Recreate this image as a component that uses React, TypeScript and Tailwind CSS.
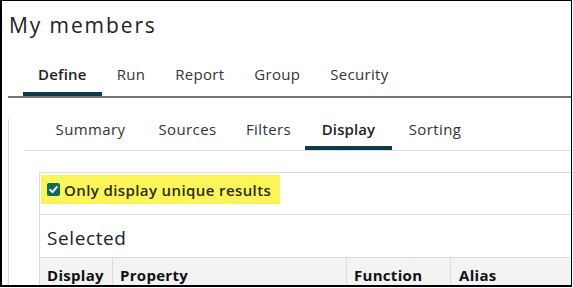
import React from "react";

const mainTabs = ["Define", "Run", "Report", "Group", "Security"];
const subTabs: { label: string; w: string }[] = [
  { label: "Summary", w: "w-[105px]" },
  { label: "Sources", w: "w-[89px]" },
  { label: "Filters", w: "w-[73px]" },
  { label: "Display", w: "w-[87px]" },
  { label: "Sorting", w: "w-[86px]" },
];

export default function App() {
  return (
    <div
      className="w-[573px] h-[288px] bg-white overflow-hidden"
      style={{ fontFamily: '"Open Sans", "Liberation Sans", sans-serif' }}
    >
      <div className="w-[572px] h-[287px] border-l-2 border-t border-r border-b-2 border-black overflow-hidden text-[#222]">
        {/* Title */}
        <div className="pl-[7px] pt-[9px] h-[47px] text-[21px] leading-[30px] tracking-[1.9px]">
          My members
        </div>

        {/* Main tabs */}
        <div className="ml-[21px] flex h-[48px] items-end">
          {mainTabs.map((t, i) => (
            <div
              key={t}
              className={
                "px-[15px] pb-[8px] text-[15px] leading-[20px] border-b-4 " +
                (i === 0
                  ? "border-[#0d3b4a] font-semibold text-[#222] tracking-[0.2px]"
                  : "border-transparent text-[#333] tracking-[0.3px]")
              }
            >
              {t}
            </div>
          ))}
        </div>

        {/* Panel */}
        <div className="ml-[6px] border-t-2 border-[#767676]">
          <div className="border-l border-[#dcdcdc] h-[200px]">
            {/* Sub tabs */}
            <div className="ml-[15px] mt-[21px] border-b border-[#dcdcdc] flex pl-[14px]">
              {subTabs.map((t, i) => (
                <div
                  key={t.label}
                  className={
                    t.w +
                    " text-center pb-[7px] text-[15px] leading-[20px] border-b-4 " +
                    (i === 3
                      ? "border-[#0d3b4a] font-semibold text-[#222] tracking-[0.1px]"
                      : "border-transparent text-[#333] tracking-[0.4px]")
                  }
                >
                  {t.label}
                </div>
              ))}
            </div>

            {/* Content box */}
            <div className="ml-[30px] mt-[21px] border-t border-l border-[#dcdcdc]">
              <div className="h-[42px] border-b border-[#dcdcdc] pt-[2px] pl-[1px]">
                <div className="inline-flex items-center h-[29px] w-[239px] bg-[#fcf55a] pl-[6px] gap-[4px]">
                  <span className="shrink-0 w-[13px] h-[13px] rounded-[2px] bg-[#0e6a5a] flex items-center justify-center">
                    <svg width="11" height="11" viewBox="0 0 10 10">
                      <path
                        d="M2 5.3 L4.1 7.4 L8.1 2.7"
                        fill="none"
                        stroke="#fff"
                        strokeWidth="1.8"
                        strokeLinecap="round"
                        strokeLinejoin="round"
                      />
                    </svg>
                  </span>
                  <span className="text-[15px] font-semibold text-[#2b2b1e] tracking-[0.4px] leading-[20px]">
                    Only display unique results
                  </span>
                </div>
              </div>
              <div className="h-[43px] border-b border-[#dcdcdc] pl-[7px] pt-[10px] text-[19px] leading-[26px] tracking-[0.6px] text-[#222]">
                Selected
              </div>
              <div className="flex bg-[#f3f3f3] h-[40px] text-[15px] font-bold leading-[20px] text-[#111] tracking-[0.3px]">
                <div className="w-[73px] border-r border-[#dcdcdc] pl-[7px] pt-[7px]">Display</div>
                <div className="w-[234px] border-r border-[#dcdcdc] pl-[7px] pt-[7px]">Property</div>
                <div className="w-[104px] border-r border-[#dcdcdc] pl-[7px] pt-[7px]">Function</div>
                <div className="flex-1 pl-[8px] pt-[7px]">Alias</div>
              </div>
            </div>
          </div>
        </div>
      </div>
    </div>
  );
}
